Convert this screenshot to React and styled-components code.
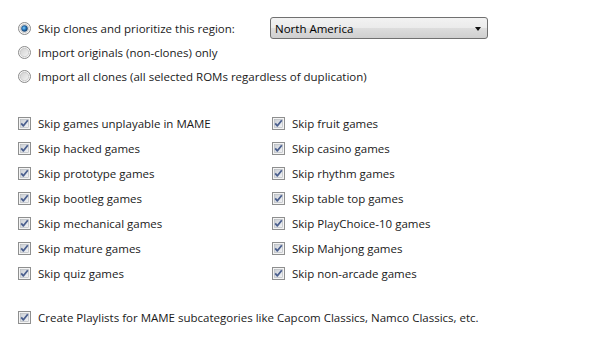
import React from 'react';
import styled, { createGlobalStyle } from 'styled-components';

const Global = createGlobalStyle`
  html, body {
    margin: 0;
    padding: 0;
    background: #fff;
  }
  body {
    font-family: "Open Sans", "Noto Sans", sans-serif;
    font-size: 11.5px;
    color: #1a1a1a;
  }
`

const Page = styled.div`
  width: 601px;
  height: 349px;
  padding: 16px 0 0 18px;
  box-sizing: border-box;
  display: flex;
  flex-direction: column;
`

const RadioGroup = styled.div`
  display: flex;
  flex-direction: column;
`

const Row = styled.label`
  display: flex;
  align-items: center;
  height: ${props => props.h || 24}px;
  white-space: nowrap;
`

const Label = styled.span`
  margin-left: 7px;
  width: ${props => props.w ? props.w + 'px' : 'auto'};
`

const Select = styled.div`
  width: 218px;
  height: 22px;
  box-sizing: border-box;
  border: 1px solid #707070;
  border-radius: 3px;
  background: linear-gradient(#f2f2f2 0%, #ebebeb 50%, #dddddd 51%, #cfcfcf 100%);
  display: flex;
  align-items: center;
  justify-content: space-between;
  padding: 0 6px 0 4px;
  color: #000;
`

const Arrow = styled.span`
  width: 0;
  height: 0;
  border-left: 3.5px solid transparent;
  border-right: 3.5px solid transparent;
  border-top: 4px solid #111;
  margin-top: 1px;
`

const Options = styled.div`
  margin-top: 23px;
  display: grid;
  grid-template-columns: 254px 1fr;
  grid-auto-flow: column;
  grid-template-rows: repeat(7, 25px);
`

const Footer = styled.div`
  margin-top: 19px;
`

const Radio = ({ checked }) => (
  <svg width="13" height="13" viewBox="0 0 13 13">
    <defs>
      <linearGradient id="rfill" x1="0" y1="0" x2="1" y2="1">
        <stop offset="0" stopColor="#d0d0d0" />
        <stop offset="1" stopColor="#f4f4f4" />
      </linearGradient>
      <radialGradient id="rdot" cx="0.4" cy="0.4" r="0.6">
        <stop offset="0" stopColor="#8bd0f5" />
        <stop offset="0.5" stopColor="#2c7fc7" />
        <stop offset="1" stopColor="#123d6b" />
      </radialGradient>
    </defs>
    <circle cx="6.5" cy="6.5" r="6" fill="#f6f6f6" stroke="#8a8a8a" strokeWidth="1" />
    <circle cx="6.5" cy="6.5" r="4.2" fill="url(#rfill)" stroke="#b8b8b8" strokeWidth="0.6" />
    {checked && <circle cx="6.5" cy="6.5" r="3" fill="url(#rdot)" stroke="#1b4a7a" strokeWidth="0.5" />}
  </svg>
)

const Check = () => (
  <svg width="13" height="13" viewBox="0 0 13 13">
    <defs>
      <linearGradient id="cfill" x1="0" y1="0" x2="1" y2="1">
        <stop offset="0" stopColor="#cbcfd5" />
        <stop offset="1" stopColor="#f3f4f6" />
      </linearGradient>
    </defs>
    <rect x="0.5" y="0.5" width="12" height="12" fill="#f4f4f4" stroke="#8e8f8f" />
    <rect x="2.5" y="2.5" width="8" height="8" fill="url(#cfill)" stroke="#b0b4ba" strokeWidth="0.6" />
    <path d="M3.2 6.4 L5.4 8.8 L9.8 3.2" fill="none" stroke="#4a5f8e" strokeWidth="1.8" strokeLinejoin="round" />
  </svg>
)

const left = [
  'Skip games unplayable in MAME',
  'Skip hacked games',
  'Skip prototype games',
  'Skip bootleg games',
  'Skip mechanical games',
  'Skip mature games',
  'Skip quiz games',
]

const right = [
  'Skip fruit games',
  'Skip casino games',
  'Skip rhythm games',
  'Skip table top games',
  'Skip PlayChoice-10 games',
  'Skip Mahjong games',
  'Skip non-arcade games',
]

const App = () =>
  <Page>
    <Global />
    <RadioGroup>
      <Row>
        <Radio checked />
        <Label w={232}>Skip clones and prioritize this region:</Label>
        <Select>
          North America
          <Arrow />
        </Select>
      </Row>
      <Row>
        <Radio />
        <Label>Import originals (non-clones) only</Label>
      </Row>
      <Row>
        <Radio />
        <Label>Import all clones (all selected ROMs regardless of duplication)</Label>
      </Row>
    </RadioGroup>
    <Options>
      {left.concat(right).map(text =>
        <Row key={text} h={25}>
          <Check />
          <Label>{text}</Label>
        </Row>
      )}
    </Options>
    <Footer>
      <Row h={25}>
        <Check />
        <Label>Create Playlists for MAME subcategories like Capcom Classics, Namco Classics, etc.</Label>
      </Row>
    </Footer>
  </Page>

export default App;
